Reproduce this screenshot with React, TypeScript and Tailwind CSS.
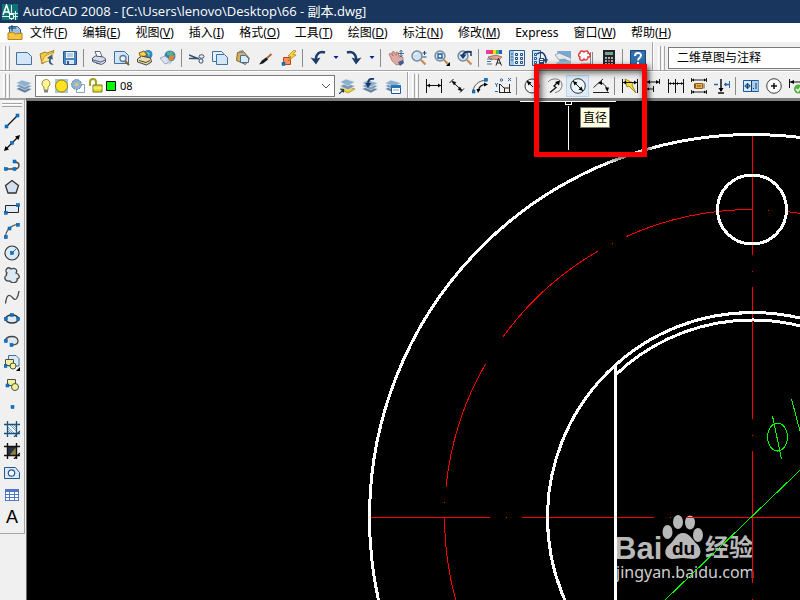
import type { ReactNode } from "react";

type Tool = { label: string; art: ReactNode; active?: boolean; narrow?: boolean };

const BLUE = "#0a78d0";
const NAVY = "#1d3a6b";

const Node = ({ x, y }: { x: number; y: number }) => (
  <rect x={x - 1.5} y={y - 1.5} width="3" height="3" fill={BLUE} stroke="#04508f" strokeWidth="0.5" />
);

const Sheet = ({ x = 0, y = 0 }: { x?: number; y?: number }) => (
  <path
    d={`M${x + 0.5} ${y + 0.5}h7.5l3 3v7.5h-10.5z`}
    fill="#d9e9f7"
    stroke="#3f72a4"
  />
);

const Layers = () => (
  <>
    <path d="M0 11l6-3 10 3-7 4z" fill="#5d7f9d" stroke="#e8eef4" strokeWidth="0.6" />
    <path d="M0 8l6-3 10 3-7 4z" fill="#7898b5" stroke="#e8eef4" strokeWidth="0.6" />
    <path d="M0 5l6-3 10 3-7 4z" fill="#8fb0cd" stroke="#e8eef4" strokeWidth="0.6" />
  </>
);

const Lens = () => (
  <>
    <path d="M10 10l4.5 4.5" stroke="#c98f58" strokeWidth="2.4" />
    <circle cx="6" cy="6" r="5" fill="#cfe2f2" stroke="#76899b" strokeWidth="1.4" />
    <path d="M3 5q1-2 3-2" fill="none" stroke="#fff" />
  </>
);

const UndoArt = () => (
  <>
    <path d="M15 2.5C9.500 .5 6 4 5.500 9.500" fill="none" stroke={NAVY} strokeWidth="2.500" />
    <path d="M0.500 7.500l5 1.500 5-1.500-4.500 7z" fill={NAVY} />
  </>
);

const DownArt = () => <path d="M0.500 6h5l-2.500 3z" fill="#0a1c9a" />;

const standardTools: (Tool | null)[] = [
  { label: "新建", art: <path d="M0.5 2.500h11l4 4v8h-15z" fill="#d4e6f6" stroke="#3f72a4" /> },
  {
    label: "打开",
    art: (
      <>
        <path d="M1 4l5-2 2 1 7-2.500-5 9L3 14z" fill="#efc84f" stroke="#a87d18" />
        <path d="M2 13l4-7 9-4-5 9z" fill="#ffe48d" stroke="#b98c20" strokeWidth="0.700" />
        <path d="M15 15c-5 0-6-3-4.500-6L8 8l5-3.500 1 5-2-.5c-1 2.500 0 4 3 6z" fill="#395a86" />
      </>
    ),
  },
  {
    label: "保存",
    art: (
      <>
        <path d="M1.500 1.500h13v13h-12l-1-1z" fill="#4d86be" stroke="#24578f" />
        <path d="M4 2h8v6H4z" fill="#edf5fc" />
        <path d="M5 4h6M5 6h6" stroke="#7ba4ca" />
        <path d="M4 10h8v4H4z" fill="#dbe7f2" />
        <path d="M5 11h2v3H5z" fill="#2c5e93" />
      </>
    ),
  },
  null,
  {
    label: "打印",
    art: (
      <>
        <path d="M4 1.500h5l2 5H6z" fill="#fff" stroke="#5c6685" />
        <path d="M1.500 8l3-2 8 1 2 2v3l-4 2.500-9-3z" fill="#d7dce8" stroke="#4d5878" />
        <path d="M2 10l8 2 4-2M5 13l4 1" fill="none" stroke="#4d5878" />
      </>
    ),
  },
  {
    label: "打印预览",
    art: (
      <>
        <path d="M0.500 1.500h10l4 4v8h-14z" fill="#d4e6f6" stroke="#3f72a4" />
        <path d="M11 11l4 4" stroke="#9a5a24" strokeWidth="2.200" />
        <circle cx="9" cy="8.500" r="3" fill="#e9f5ff" stroke="#58799a" strokeWidth="1.300" />
      </>
    ),
  },
  {
    label: "发布",
    art: (
      <>
        <circle cx="11" cy="4.500" r="4.500" fill="#2f86c4" />
        <path d="M9 1l4 2-1 4z" fill="#7ec5a0" />
        <path d="M2 3l5-2 3 4-6 3z" fill="#ffd34a" stroke="#7c5c1a" />
        <path d="M0.500 9l4-3 9 2 1 4-5 3-9-3z" fill="#e6dcb0" stroke="#4c4630" />
        <path d="M2 10.500l7 2 4-2" fill="none" stroke="#4c4630" />
      </>
    ),
  },
  {
    label: "三维 DWF",
    art: (
      <>
        <circle cx="10" cy="6" r="5.500" fill="#2f7fbd" />
        <path d="M7 2l4-1 3 3-3 2-4-1z" fill="#54b48e" />
        <path d="M9 6l6-1-2 5-4 1z" fill="#e0862d" />
        <path d="M0 8l5-2 4 3-1 4-3 1z" fill="#dbe4ee" stroke="#7890ab" strokeWidth="0.700" />
        <path d="M7 9l5 3-3 3z" fill="#b9cde2" />
      </>
    ),
  },
  null,
  {
    label: "剪切",
    art: (
      <g fill="none" stroke="#38506e">
        <path d="M0 5l10 4M0 8.500h10" strokeWidth="1.500" />
        <ellipse cx="12.500" cy="6.500" rx="2.500" ry="1.800" />
        <ellipse cx="12" cy="11" rx="2" ry="2.200" />
      </g>
    ),
  },
  {
    label: "复制",
    art: (
      <>
        <path d="M0.500 1.500h9l2 2v8h-11z" fill="#e3eff9" stroke="#3f72a4" />
        <path d="M4.500 4.500h8l3 3v7h-11z" fill="#d4e6f6" stroke="#3f72a4" />
      </>
    ),
  },
  {
    label: "粘贴",
    art: (
      <>
        <path d="M2.500 2.500l6-1 6 7-4 6-9-4z" fill="#d3b163" stroke="#84662a" />
        <path d="M4 1l4-1 1 3H5z" fill="#8b8f96" />
        <path d="M5.500 5.500h5l3 3v4h-8z" fill="#dcebf8" stroke="#3f72a4" />
      </>
    ),
  },
  {
    label: "特性匹配",
    art: (
      <>
        <path d="M13.500 4L8 9" stroke="#9c6b3a" strokeWidth="1.800" />
        <path d="M8 7.500L10 9.500 5 13.500 1 14.500l3-4z" fill="#17191c" />
      </>
    ),
  },
  {
    label: "块编辑器",
    art: (
      <>
        <path d="M2.500 7.500h7v7h-7z" fill="#ff8f5e" stroke="#c0431b" />
        <path d="M13 0L7 6l3 .5L7 11l8-6-3-.5L15 1z" fill="#ffd633" stroke="#8d6a0a" strokeWidth="0.600" />
        <Node x={2.500} y={14} />
      </>
    ),
  },
  null,
  { label: "放弃", art: <UndoArt /> },
  { label: "放弃列表", art: <DownArt />, narrow: true },
  {
    label: "重做",
    art: (
      <g transform="matrix(-1 0 0 1 16 0)">
        <UndoArt />
      </g>
    ),
  },
  { label: "重做列表", art: <DownArt />, narrow: true },
  null,
  {
    label: "实时平移",
    art: (
      <>
        <path d="M1 4l2-1 2 3-1-4 2-.5 2 4V2l2 .3 1 5 2-1 2 1v4l-2 3-5 .5-4-4z" fill="#e0aaa0" stroke="#a0685e" strokeWidth="0.700" />
        <path d="M10 12l5-2 1 3-4 3z" fill="#3d5f96" />
        <path d="M10 3.500h6M13 .5v6M11.500 1.800L13 .3l1.500 1.500M11.500 5.200L13 6.700l1.500-1.500" fill="none" stroke="#1d4877" strokeWidth="0.800" />
      </>
    ),
  },
  {
    label: "实时缩放",
    art: (
      <>
        <Lens />
        <path d="M11.500 3h4M13.500 1v4M11.500 7h4" stroke="#1d4877" />
      </>
    ),
  },
  {
    label: "窗口缩放",
    art: (
      <>
        <Lens />
        <path d="M4 4h4v4H4z" fill="#fff" stroke="#1d5b9b" strokeWidth="1.300" />
        <path d="M16 12v4h-4z" />
      </>
    ),
  },
  {
    label: "缩放上一个",
    art: (
      <>
        <Lens />
        <path d="M14 2c-5-1-7 0-8 3" fill="none" stroke={NAVY} strokeWidth="2" />
        <path d="M2.500 4.500h7L6 9z" fill={NAVY} />
        <path d="M14 1v5" stroke={NAVY} strokeWidth="1.500" />
      </>
    ),
  },
  null,
  {
    label: "特性",
    art: (
      <>
        <path d="M0 0h4v4H0z" fill="#e838b8" />
        <path d="M4 0h3v4H4z" fill="#e84a2c" />
        <path d="M7 0h3v4H7z" fill="#f4d92c" />
        <path d="M10 0h3v4h-3z" fill="#43c54b" />
        <path d="M13 0h3v4h-3z" fill="#2f56d8" />
        <path d="M2 7l8-2 6 2-3 3-6-1-2 1z" fill="#dca38f" stroke="#8d4f40" strokeWidth="0.700" />
        <path d="M1 9h5M1 11.500h4M1 14h5" stroke="#4c7098" />
        <path d="M10 15.500l2.500-7 3 7M11 13h4" fill="none" stroke="#222" />
      </>
    ),
  },
  {
    label: "设计中心",
    art: (
      <>
        <path d="M0.500 .5h15v15H.5z" fill="#e9f2fb" stroke="#275d95" />
        <path d="M1 1h4v14H1z" fill="#9ec1e2" />
        <path d="M2 4h2M2 7h2M2 10h2" stroke="#275d95" />
        <path d="M6.500 3.500h2v2h-2zM11.500 3.500h2v2h-2zM6.500 7.500h2v2h-2zM11.500 7.500h2v2h-2zM6.500 11.500h2v2h-2zM11.500 11.500h2v2h-2z" fill="#fff" stroke="#1a4a7c" />
      </>
    ),
  },
  {
    label: "工具选项板",
    art: (
      <>
        <path d="M0.500 .5h8v15h-8z" fill="#d3e5f5" stroke="#24578f" />
        <path d="M2.500 3.500h2v2h-2zM2.500 7.500h2v2h-2zM2.500 11.500h2v2h-2z" fill="#fff" stroke="#24578f" />
        <path d="M5 4c6-4 9 1 9 7" fill="none" stroke={NAVY} strokeWidth="1.500" />
        <path d="M11 9h5l-2 5zM7 8h5v6H7z" fill="#2b4d79" />
        <path d="M8 9.500h3M8 11.500h3" stroke="#fff" />
      </>
    ),
  },
  {
    label: "图纸集",
    art: (
      <>
        <path d="M2 1h14v13H5z" fill="#79a8cf" />
        <path d="M0 5l4-2 12 5v4l-7-3-5 1z" fill="#e4e9ee" stroke="#8194a6" strokeWidth="0.800" />
        <path d="M1 13c4-3 8 0 11-2l4 1v3H2z" fill="#a7bdcf" />
      </>
    ),
  },
  {
    label: "标记集",
    art: (
      <>
        <path d="M12.500 2v12M14.500 2v12M3 14h10" stroke="#7f8790" />
        <path d="M2 3c0-3 3-2 4-1 2-2 5-1 4 1 3 1 3 4 0 4 0 3-3 4-4 2-2 3-5 1-4-2-2-1-2-3 0-4z" fill="#fff" stroke="#e0383b" strokeWidth="1.400" />
      </>
    ),
  },
  {
    label: "快速计算器",
    art: (
      <>
        <path d="M2 0h12v16H2z" fill="#20262b" />
        <path d="M4 2h8v3H4z" fill="#75a68c" />
        <path d="M4 8h8M4 11h8M4 14h8" stroke="#d9dde0" strokeWidth="1.500" strokeDasharray="2 1" />
        <path d="M7 11h2" stroke="#e03a2c" strokeWidth="1.500" />
      </>
    ),
  },
  null,
  {
    label: "帮助",
    art: (
      <>
        <path d="M0.500 .5h15v15H.5z" fill="#2f6fae" stroke="#17477b" />
        <path d="M5 6c0-4 6-4 6-.5C11 8 8 7.500 8 10.500" fill="none" stroke="#fff" strokeWidth="2" />
        <path d="M7 12h2v2H7z" fill="#fff" />
      </>
    ),
  },
];

const layerTools: Tool[] = [
  {
    label: "将对象的图层置为当前",
    art: (
      <>
        <path d="M1 11l6-3 9 3-7 4z" fill="#f1d42e" stroke="#8b7612" strokeWidth="0.600" />
        <path d="M1 8l6-3 9 3-7 4z" fill="#7898b5" stroke="#e8eef4" strokeWidth="0.600" />
        <path d="M1 4l6-3 9 3-7 4z" fill="#8fb0cd" stroke="#e8eef4" strokeWidth="0.600" />
        <path d="M0 16l4-4M1.500 11.500h3v3" fill="none" stroke={NAVY} strokeWidth="1.200" />
      </>
    ),
  },
  {
    label: "上一个图层",
    art: (
      <>
        <Layers />
        <path d="M12 1C7 0 6 3 6 6" fill="none" stroke={NAVY} strokeWidth="2" />
        <path d="M3 5h6.500L6 10z" fill={NAVY} />
      </>
    ),
  },
  {
    label: "图层状态管理器",
    art: (
      <>
        <Layers />
        <path d="M6.500 7.500h9v8h-9z" fill="#fff" stroke="#1c5b98" />
        <path d="M6 7h10v3H6z" fill="#2b74b8" />
        <path d="M8 12h6" stroke="#7ba4ca" />
      </>
    ),
  },
];

const dimensionTools: (Tool | null)[] = [
  {
    label: "线性",
    art: (
      <>
        <path d="M0.500 1v14M15.500 1v14M1 7.500h14" fill="none" stroke="#111" />
        <path d="M1 7.500L4 5.500v4zM15 7.500L12 5.500v4z" />
      </>
    ),
  },
  {
    label: "对齐",
    art: (
      <>
        <path d="M0.500 5l4-4M11 14.500l4-4M3 3.500l10 9" stroke="#111" />
        <path d="M3 3l4 1.500-2 2.500zM13 13l-4-1.500 2-2.500z" stroke="#111" strokeWidth="0.500" />
      </>
    ),
  },
  {
    label: "弧长",
    art: (
      <>
        <path d="M1 13C2 7 6 3 14 2" fill="none" stroke="#555" />
        <path d="M6.500 13c0-4 3-6.500 7-6.500" fill="none" stroke="#111" strokeWidth="1.200" />
        <path d="M4.500 11h4L6 15zM12 4.500v4l4-2z" />
        <Node x={1.500} y={13.500} />
        <Node x={14} y={1.800} />
      </>
    ),
  },
  {
    label: "坐标",
    art: (
      <>
        <path d="M4.500 6v9M4 14.500h12M5 6l4 4h6M9.500 10v5M14.500 6v8" fill="none" stroke="#222" />
        <path d="M0 5l1.500 2L3 5M1.500 7v2M13 0l3 3M16 0l-3 3" fill="none" stroke="#2968a5" />
        <circle cx="6.500" cy="2" r="1.200" fill="none" stroke="#2968a5" />
        <path d="M0 13.500h3" stroke="#2968a5" />
      </>
    ),
  },
  null,
  {
    label: "半径",
    art: (
      <>
        <circle cx="8" cy="8" r="7" fill="#f7f9fb" stroke="#333" />
        <path d="M3 3l6 6" stroke="#111" />
        <path d="M2.500 2.500l5 2-3 3z" />
      </>
    ),
  },
  {
    label: "折弯",
    art: (
      <>
        <path d="M1 4C5-1 15 0 15 7c0 4-3 7-7 7.500" fill="none" stroke="#777" />
        <path d="M3 14.500l6-5-2-1.500 4-4" fill="none" stroke="#111" strokeWidth="1.300" />
        <path d="M13 2.500l-1 5-4-3.500z" />
      </>
    ),
  },
  {
    label: "直径",
    active: true,
    art: (
      <>
        <circle cx="8" cy="8" r="7.300" fill="#edf5fb" stroke="#333" />
        <path d="M3 3l10 10" stroke="#111" />
        <path d="M3 3l4.500 1.500-3 3zM13 13l-4.500-1.500 3-3z" />
      </>
    ),
  },
  {
    label: "角度",
    art: (
      <>
        <path d="M0 14.500h16M0.500 9.500L10 1" fill="none" stroke="#222" />
        <path d="M6 4.500c4 0 7 3 8 7" fill="none" stroke="#222" />
        <path d="M12 9.500h4l-1.500 4.500zM5 5l4-2v4z" />
      </>
    ),
  },
  null,
  {
    label: "快速标注",
    art: (
      <>
        <path d="M3 1l8 4-1 2 4 8-7-7-2 1z" fill="#ffe22e" stroke="#87700b" strokeWidth="0.800" />
        <path d="M0.500 1v14M15.500 1v14M1 4.500h14" fill="none" stroke="#111" />
        <path d="M1 4.500l3-2v4zM15 4.500l-3-2v4z" />
      </>
    ),
  },
  {
    label: "基线",
    art: (
      <>
        <path d="M1.500 1v14M14.500 1v5M8.500 8v6M2 4h12M2 11h7" fill="none" stroke="#111" />
        <path d="M2 4l3-2v4zM14 4l-3-2v4zM2 11l2-1.500v3z" />
      </>
    ),
  },
  {
    label: "连续",
    art: (
      <>
        <path d="M0.500 1v14M7.500 1v14M15.500 1v14M1 5.500h14" fill="none" stroke="#111" />
        <path d="M1 5.500L3 4v3zM7 5.500L5 4v3zM8 5.500L10 4v3zM15 5.500L13 4v3z" />
      </>
    ),
  },
  {
    label: "标注间距",
    art: (
      <>
        <path d="M0.500 0v4M15.500 0v4M1 2h14M.5 12v4M15.500 12v4M1 14h14" stroke="#222" />
        <path d="M1 2l2-1.500v3zM15 2l-2-1.500v3zM1 14l2-1.500v3zM15 14l-2-1.500v3z" />
        <path d="M4.500 5.500h7v5h-7z" fill="#e7b34e" stroke="#936019" />
        <path d="M6 8h4M3.500 5.500v5M13 5.500v5" stroke="#714b13" />
      </>
    ),
  },
  {
    label: "折断标注",
    art: (
      <>
        <path d="M0 6.500h4M10 6.500h6" stroke="#2968a5" strokeWidth="1.500" />
        <path d="M15.500 3v7" stroke="#2968a5" />
        <path d="M14 6.500l-3-2v4z" fill="#2968a5" />
        <path d="M7 1v12M4 15h6" stroke="#111" strokeWidth="1.500" />
        <path d="M4.500 10h5L7 14z" />
      </>
    ),
  },
  null,
  {
    label: "公差",
    art: (
      <>
        <path d="M0.500 2.500h15v11H.5z" fill="#d8eafa" stroke="#1c5b98" />
        <path d="M8 3h7.500v10H8z" fill="#a9cdec" />
        <circle cx="4.500" cy="8" r="2" fill="none" stroke="#1c5b98" />
        <path d="M4.500 5v6M1.500 8h6M8.500 3v10M10 10.500h1M13 5v6" stroke="#123d6c" />
      </>
    ),
  },
  {
    label: "圆心标记",
    art: (
      <>
        <circle cx="8" cy="8" r="7.300" fill="#fafafa" stroke="#444" />
        <path d="M5 8h6M8 5v6" stroke="#111" strokeWidth="1.500" />
      </>
    ),
  },
  {
    label: "检验",
    art: (
      <>
        <path d="M0.500 1v9M1 4h14" stroke="#111" />
        <path d="M1 4l4-2v4z" />
        <circle cx="9.500" cy="11" r="4.500" fill="#52b43b" />
        <path d="M7 11l2 2 3-4" fill="none" stroke="#fff" strokeWidth="1.500" />
      </>
    ),
  },
];

const YELLOW = "#f4ef9c";

const drawTools: Tool[] = [
  {
    label: "直线",
    art: (
      <>
        <path d="M2.500 13.500l11-11" stroke="#111" strokeWidth="1.300" />
        <Node x={2.500} y={13.500} />
        <Node x={13.500} y={2.500} />
      </>
    ),
  },
  {
    label: "构造线",
    art: (
      <>
        <path d="M2 14L14 2" stroke="#111" strokeWidth="1.300" />
        <path d="M0 16l1.500-5L5 14.500zM16 0l-5 1.500L14.500 5z" />
        <Node x={8} y={8} />
      </>
    ),
  },
  {
    label: "多段线",
    art: (
      <>
        <path d="M1.500 12h9c6 0 6-7 0-7" fill="none" stroke="#444" strokeWidth="1.400" />
        <Node x={1.800} y={12} />
        <Node x={10.500} y={12} />
        <Node x={10.500} y={4.500} />
      </>
    ),
  },
  { label: "正多边形", art: <path d="M8 1.500l6.500 5-2.500 7.500H4L1.500 6.500z" fill="#d3e1ee" stroke="#333" strokeWidth="1.300" /> },
  {
    label: "矩形",
    art: (
      <>
        <path d="M1.500 4.500h13v7h-13z" fill="#dfebf5" stroke="#222" />
        <Node x={1.800} y={11.800} />
        <Node x={14.200} y={4.200} />
      </>
    ),
  },
  {
    label: "圆弧",
    art: (
      <>
        <path d="M1.500 14C2 7 7 2 14 1.500" fill="none" stroke="#666" strokeWidth="1.300" />
        <Node x={1.800} y={14.200} />
        <Node x={5.500} y={5.500} />
        <Node x={14} y={1.800} />
      </>
    ),
  },
  {
    label: "圆",
    art: (
      <>
        <circle cx="8" cy="8" r="7" fill="#dbe9f4" stroke="#333" strokeWidth="1.200" />
        <path d="M8 8l4-4" stroke={BLUE} />
        <Node x={8} y={8} />
      </>
    ),
  },
  {
    label: "修订云线",
    art: (
      <path
        d="M3 6C0 3 4-1 7 2c4-2 7 1 5 4 3 1 5 5 1 6 1 4-5 5-7 2-5 1-7-4-3-6-1 0-1-1 0-2z"
        fill="#dbe9f4"
        stroke="#444"
        strokeWidth="1.300"
      />
    ),
  },
  { label: "样条曲线", art: <path d="M1.500 14.500C3 1 8 8 9 9c3 4 5-1 6-7" fill="none" stroke="#444" strokeWidth="1.300" /> },
  {
    label: "椭圆",
    art: (
      <>
        <ellipse cx="8" cy="8" rx="6.500" ry="4" fill="#dbe9f4" stroke="#333" strokeWidth="1.300" />
        <Node x={8} y={4} />
        <Node x={1.800} y={8} />
        <Node x={14.200} y={8} />
      </>
    ),
  },
  {
    label: "椭圆弧",
    art: (
      <>
        <path d="M1.500 8C2 2 14 2 14 8c0 3-3 4-6 4" fill="#dbe9f4" stroke="#444" strokeWidth="1.300" />
        <Node x={1.800} y={8} />
        <Node x={7.500} y={12} />
      </>
    ),
  },
  {
    label: "插入块",
    art: (
      <>
        <Sheet x={4} />
        <path d="M1.500 4.500h8v6h-8z" fill={YELLOW} stroke="#44544a" />
        <circle cx="9" cy="11" r="3" fill={YELLOW} stroke="#44544a" />
        <Node x={1.500} y={11} />
        <path d="M16 12v4h-4z" />
      </>
    ),
  },
  {
    label: "创建块",
    art: (
      <>
        <path d="M3.500 2.500h8v6h-8z" fill={YELLOW} stroke="#44544a" />
        <circle cx="11" cy="10" r="3.500" fill={YELLOW} stroke="#44544a" />
        <Node x={3.500} y={8.500} />
      </>
    ),
  },
  { label: "点", art: <Node x={8.500} y={8} /> },
  {
    label: "图案填充",
    art: (
      <>
        <path d="M3 3h10v10H3z" fill="#f4f9fd" />
        <path d="M3 5l8 8M3 9l4 4M5 3l8 8M9 3l4 4M3 7l6 6M7 3l6 6" stroke="#4179a9" strokeWidth="0.700" />
        <path d="M3.500 0v16M12.500 0v16M0 3.500h16M0 12.500h16M10 16l6-6" stroke="#1b517f" strokeWidth="1.300" />
      </>
    ),
  },
  {
    label: "渐变色",
    art: (
      <>
        <path d="M3 3h10v10H3z" fill="#27324e" />
        <path d="M13 3v10H5z" fill="#8e843d" />
        <path d="M3.500 0v16M12.500 0v16M0 3.500h16M0 12.500h16M10 16l6-6" stroke="#111" strokeWidth="1.400" />
      </>
    ),
  },
  {
    label: "面域",
    art: (
      <>
        <path d="M0.500 2.500h11l4 5v6h-15z" fill="#dbe9f4" stroke="#24578f" />
        <circle cx="7.500" cy="8" r="3.200" fill="#f6faff" stroke="#24578f" strokeWidth="1.200" />
      </>
    ),
  },
  {
    label: "表格",
    art: (
      <>
        <path d="M1 2h14v12H1z" fill="#4f79c7" />
        <path d="M2 5h3v2H2zM6 5h4v2H6zM11 5h3v2h-3zM2 8h3v2H2zM6 8h4v2H6zM11 8h3v2h-3zM2 11h3v2H2zM6 11h4v2H6zM11 11h3v2h-3z" fill="#fff" />
      </>
    ),
  },
];

const menus = [
  ["文件", "F"],
  ["编辑", "E"],
  ["视图", "V"],
  ["插入", "I"],
  ["格式", "O"],
  ["工具", "T"],
  ["绘图", "D"],
  ["标注", "N"],
  ["修改", "M"],
  ["Express", ""],
  ["窗口", "W"],
  ["帮助", "H"],
];

const ToolButton = ({ tool }: { tool: Tool }) => (
  <button
    type="button"
    aria-label={tool.label}
    className={`flex h-[22px] shrink-0 items-center justify-center ${
      tool.narrow ? "w-[13px]" : "w-[23px]"
    } ${tool.active ? "border border-[#b5d5ee] bg-[#dcebf7]" : ""}`}
  >
    <svg
      viewBox={tool.narrow ? "0 0 6 16" : "0 0 16 16"}
      className={tool.narrow ? "h-4 w-1.5 shrink-0" : "size-4 shrink-0"}
    >
      {tool.art}
    </svg>
  </button>
);

const ToolGroup = ({ tools }: { tools: (Tool | null)[] }) => (
  <div className="flex shrink-0 items-center">
    {tools.map((tool, i) =>
      tool ? (
        <ToolButton key={tool.label} tool={tool} />
      ) : (
        <div key={i} className="mr-[3px] ml-[2px] h-[18px] w-px shrink-0 bg-[#8c8c8c]" />
      )
    )}
  </div>
);

const Grip = () => (
  <div className="flex h-6 shrink-0 gap-px">
    <div className="w-[3px] border-r border-l border-r-[#a5a5a5] border-l-white" />
    <div className="w-[3px] border-r border-l border-r-[#a5a5a5] border-l-white" />
  </div>
);

const LayerIcons = () => (
  <svg viewBox="0 0 80 16" className="h-4 w-20 shrink-0">
    <path d="M4 6a4 4 0 1 1 6 3v3H6V9Q4 8 4 6z" fill="#fff79b" stroke="#a29232" />
    <path d="M6 12h4v2.500H6z" fill="#77838f" />
    <path d="M17 1h13v14H17z" fill="#a9c4da" />
    <circle cx="23.500" cy="8" r="6" fill="#ffe321" stroke="#98800f" />
    <path d="M38.500 6.500h8v8h-8z" fill="#fff" stroke="#86a3c0" />
    <circle cx="38.500" cy="6.500" r="5" fill="#8fb3d4" stroke="#5d84a8" strokeDasharray="2 1" />
    <circle cx="38.500" cy="6.500" r="2" fill="#d5c57c" />
    <path d="M52 8V4c0-4 6-4 6 0v5" fill="none" stroke="#a5a31d" strokeWidth="2" />
    <path d="M55 7h9v7h-9z" fill="#e5e02c" stroke="#77751a" />
    <path d="M55 10h9" stroke="#fbf9a6" />
    <path d="M68.500 3.500h9v9h-9z" fill="#0f0" stroke="#000" />
  </svg>
);

const Drawing = () => (
  <svg className="size-full" fill="none" aria-label="图形">
    {/* drawing origin sits at the top left corner of the window */}
    <g transform="translate(-27 -101)" fill="#b8b8b8">
      <text x="614" y="559" fontSize="31" className="font-['Liberation_Sans'] font-bold">
        Bai
      </text>
      <ellipse cx="667.500" cy="532" rx="5" ry="7" />
      <ellipse cx="678" cy="522" rx="5" ry="7" />
      <ellipse cx="690" cy="522.500" rx="5" ry="7" />
      <ellipse cx="698" cy="535" rx="5" ry="7" />
      <path d="M683 533c-7 0-8 7-13 11-8 6-5 15 3 15 4 0 6-1 10-1s6 1 10 1c8 0 10-9 4-15-5-4-7-11-14-11z" />
      <text x="672" y="555" fontSize="19" fill="#000" className="font-['Liberation_Sans'] font-bold">
        du
      </text>
      <text x="705" y="556" fontSize="24" className="font-['Noto_Sans_CJK_SC'] font-bold">
        经验
      </text>
      <text x="616" y="578" fontSize="16" fill="#d0d0d0" className="font-['Noto_Sans']">
        jingyan.baidu.com
      </text>
    </g>
    <g transform="translate(-27 -101)" shapeRendering="crispEdges">
      <g stroke="#f00">
        <path
          d="M752.5 209.500A308 308 0 0 0 444.500 517.500A308 308 0 0 0 460 614"
          strokeDasharray="130 15 1 15.270"
        />
        <path d="M768 210.500h1M785 211.500Q800 213 815 216" />
        <path d="M752.500 135v120M752.500 271v1M752.500 287v132M752.500 435v1M752.500 451v132M752.500 599v1" />
        <path d="M371 517.500h119M506 517.500h1M522 517.500h132M670 517.500h1M686 517.500h134" />
      </g>
      <g stroke="#fff" strokeWidth="3">
        <circle cx="752.500" cy="517.500" r="383" />
        <circle cx="752.500" cy="517.500" r="205" />
        <circle cx="752" cy="209.500" r="34.500" />
        <path d="M615.500 375A197.500 197.500 0 0 1 860 352M615.500 364v260" />
      </g>
      <g stroke="#0f0">
        <path d="M665 600L820 451M772.500 416l9 43M791.500 399l9 34" />
        <ellipse cx="777.500" cy="437" rx="10" ry="14" />
      </g>
      <g stroke="#fff">
        <path d="M520 101.500h96M568.500 106v44" />
        <path d="M565.500 101.500h6v3h-6z" />
      </g>
    </g>
  </svg>
);

const App = () => (
  <div className="relative flex h-screen flex-col overflow-hidden bg-[#f0f0f0] font-['Noto_Sans','Noto_Sans_CJK_SC',sans-serif] text-xs text-black">
    <header className="flex h-[23px] shrink-0 items-center gap-[5px] bg-[#19375e] px-0.5 text-white">
      <svg viewBox="0 0 16 16" className="size-4 shrink-0">
        <path d="M0 0h16v16H0z" fill="#0e7373" />
        <path d="M1 11L4.500 1 8 11M2 8h5" fill="none" stroke="#fff" strokeWidth="1.500" />
        <path d="M9.500 1v15M0 12.500h16M13.500 7v9M8 9.500h8" stroke="#d9f2f2" />
        <path d="M7.500 10.500h4v4h-4z" fill="#0e7373" stroke="#fff" />
      </svg>
      <h1 className="font-['Open_Sans','Noto_Sans_CJK_SC',sans-serif] text-[13px] whitespace-nowrap">
        AutoCAD 2008 - [C:\Users\lenovo\Desktop\66 - 副本.dwg]
      </h1>
    </header>

    <nav className="flex h-[19px] shrink-0 items-center bg-white pl-[7px]">
      <svg viewBox="0 0 16 16" className="mr-[7px] size-4 shrink-0">
        <path d="M2.500 1.500h8l3 3v6h-11z" fill="#9dc0e4" stroke="#336699" />
        <path d="M5 0v6M1 3h8" stroke="#123d6c" />
        <path d="M1 14.500V8l5-1 2 2 7-1v6.500z" fill="#f4c640" stroke="#b68317" />
      </svg>
      <div className="flex gap-[15px]">
        {menus.map(([name, key]) => (
          <button key={name} type="button" className="shrink-0 whitespace-nowrap">
            {name}
            {key && (
              <>
                (<span className="underline">{key}</span>)
              </>
            )}
          </button>
        ))}
      </div>
    </nav>

    <div className="flex h-[29px] shrink-0 overflow-hidden border-b border-[#a5a5a5]">
      <div className="flex shrink-0 items-center gap-0.5 border-r border-[#a5a5a5] pt-[3px] pr-[3px] pl-[3px]">
        <Grip />
        <ToolGroup tools={standardTools} />
      </div>
      <div className="flex min-w-0 flex-1 items-center gap-[3px] border-l border-white pt-[3px] pl-1">
        <Grip />
        <select
          aria-label="工作空间"
          className="h-[22px] min-w-0 flex-1 appearance-none border border-r-0 border-[#7a7a7a] bg-white pl-2"
        >
          <option>二维草图与注释</option>
        </select>
      </div>
    </div>

    <div className="flex h-[27px] shrink-0 overflow-hidden border-t border-white">
      <div className="flex shrink-0 items-center border-r border-[#a5a5a5] pt-0.5 pr-[3px] pl-[3px]">
        <Grip />
        <div className="w-0.5" />
        <ToolButton tool={{ label: "图层特性管理器", art: <Layers /> }} />
        <div className="flex h-[22px] w-[300px] items-center border border-[#7a7a7a] bg-white pl-0.5">
          <LayerIcons />
          <select aria-label="图层" className="min-w-0 flex-1 appearance-none bg-transparent pl-0.5 text-[11px]">
            <option>08</option>
          </select>
          <svg viewBox="0 0 10 6" className="mr-[3px] h-1.5 w-2.5 shrink-0">
            <path d="M1 1l4 4 4-4" fill="none" stroke="#555" />
          </svg>
        </div>
        <ToolGroup tools={layerTools} />
      </div>
      <div className="flex items-center gap-[3px] border-l border-white pt-0.5 pl-[3px]">
        <Grip />
        <ToolGroup tools={dimensionTools} />
      </div>
    </div>

    <main className="flex min-h-0 flex-1">
      <aside className="w-[26px] shrink-0 border-t-2 border-[#a5a5a5] pr-px">
        <div className="flex flex-col items-center border-r border-b border-[#a5a5a5] pt-px pb-[5px]">
          <div className="h-[3px] w-5 border-t border-b border-t-white border-b-[#a5a5a5]" />
          <div className="mb-[3px] h-[3px] w-5 border-t border-b border-t-white border-b-[#a5a5a5]" />
          {drawTools.map((tool) => (
            <ToolButton key={tool.label} tool={tool} />
          ))}
          <button
            type="button"
            aria-label="多行文字"
            className="h-[22px] font-['Liberation_Sans'] text-lg leading-[22px]"
          >
            A
          </button>
        </div>
      </aside>
      <section className="min-w-0 flex-1 overflow-hidden border-t-[3px] border-l border-t-[#7d7d7d] border-l-[#6a6a6a] bg-black">
        <Drawing />
      </section>
    </main>

    <div
      role="tooltip"
      className="absolute top-[107px] left-[580px] border border-[#767676] bg-[#ffffe1] px-0.5 leading-[19px]"
    >
      直径
    </div>
    <div className="pointer-events-none absolute top-[64px] left-[534px] h-[93px] w-[113px] border-[5px] border-[#f00] shadow-[2px_2px_6px_rgba(0,0,0,0.7),inset_2px_3px_7px_rgba(0,0,0,0.7)]" />
  </div>
);

export default App;
